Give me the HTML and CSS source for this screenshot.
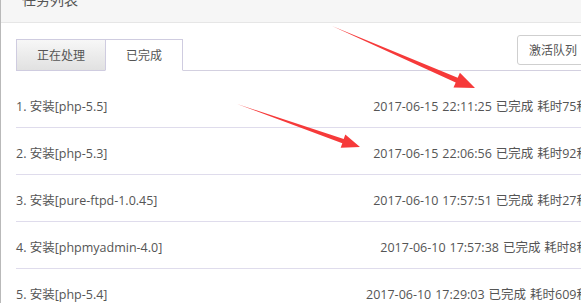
FILE: index.html
```html
<!DOCTYPE html>
<html lang="zh-CN">
<head>
  <meta charset="UTF-8">
  <title>任务列表</title>
  <link rel="stylesheet" href="styles.css">
</head>
<body>

<div class="panel">
  <div class="panel-head">
    <span class="panel-title">任务列表</span>
  </div>

  <div class="panel-body">
    <div class="tab-bar">
      <div class="tabs">
        <a class="tab" href="#">正在处理</a>
        <a class="tab active" href="#">已完成</a>
      </div>
      <button class="btn">激活队列</button>
    </div>

    <ul class="task-list">
      <li><span>1. 安装[php-5.5]</span><span class="info">2017-06-15 22:11:25 已完成 耗时75秒</span></li>
      <li><span>2. 安装[php-5.3]</span><span class="info">2017-06-15 22:06:56 已完成 耗时92秒</span></li>
      <li><span>3. 安装[pure-ftpd-1.0.45]</span><span class="info">2017-06-10 17:57:51 已完成 耗时27秒</span></li>
      <li><span>4. 安装[phpmyadmin-4.0]</span><span class="info">2017-06-10 17:57:38 已完成 耗时8秒</span></li>
      <li><span>5. 安装[php-5.4]</span><span class="info">2017-06-10 17:29:03 已完成 耗时609秒</span></li>
    </ul>
  </div>
</div>

<!-- annotation arrows drawn over the screenshot -->
<svg class="marks" width="581" height="303" viewBox="0 0 581 303">
  <polygon points="332,26 455.7,82.4 453.5,87.4 475,88 459.9,72.8 457.7,77.8" fill="#f63a3a"/>
  <polygon points="237,104 342.3,143.2 340.7,147.7 360,147 345.3,134.5 343.7,139.0" fill="#f63a3a"/>
</svg>

</body>
</html>
```

FILE: styles.css
```css
body {
  margin: 0;
  overflow: hidden;
  font-family: "Open Sans", "Noto Sans CJK SC", sans-serif;
  font-size: 12px;
  color: #555;
  background: #fff;
}
.panel {
  width: 603px;
  border-left: 1px solid #b9b9b9;
}
.panel-head {
  height: 22px;
  overflow: hidden;
  background-color: #f6f6f6;
  border-bottom: 1px solid #e6e6e6;
  padding: 0 21px;
}
.panel-title {
  display: block;
  margin-top: -10px;
  line-height: 20px;
  font-size: 14px;
}
.panel-body {
  padding: 12px 15px 0 15px;
}
.tab-bar {
  display: flex;
  justify-content: space-between;
  align-items: flex-end;
  border-bottom: 1px solid #d3d0e0;
}
.tabs {
  display: flex;
}
.tab {
  display: block;
  height: 30px;
  line-height: 32px;
  padding: 0 20px;
  margin-bottom: -1px;
  border: 1px solid #cfcce0;
  color: #555;
  text-decoration: none;
  background: linear-gradient(#f7f7f7, #e1e1e1);
}
.tab.active {
  margin-left: -1px;
  background: #fff;
  border-bottom-color: #fff;
}
.btn {
  height: 30px;
  margin-bottom: 5px;
  padding: 0 11px;
  font: inherit;
  color: #555;
  background: #fff;
  border: 1px solid #cfcfcf;
  border-radius: 3px;
}
.task-list {
  list-style: none;
  margin: 0;
  padding: 10px 0 0 0;
}
.task-list li {
  display: flex;
  justify-content: space-between;
  padding: 18px 0 12px 0;
  font-size: 12.5px;
  line-height: 16px;
  border-bottom: 1px solid #dfdcec;
}
.task-list .info {
  word-spacing: 0.7px;
}
.marks {
  position: absolute;
  top: 0;
  left: 0;
  pointer-events: none;
}
```
